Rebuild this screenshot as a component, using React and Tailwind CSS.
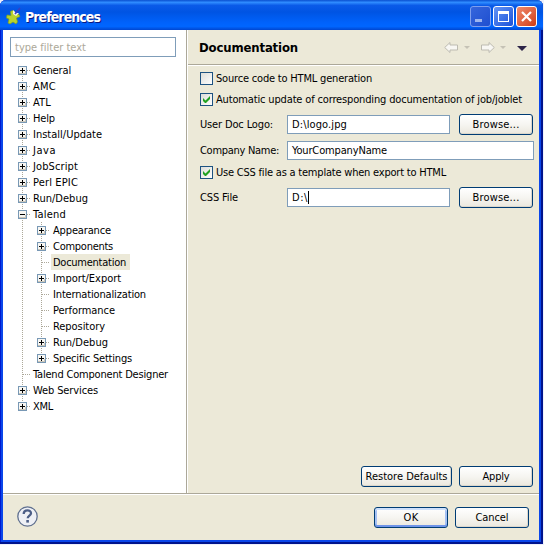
import { useLayoutEffect, useRef, useState } from "react";

// Text whose letter spacing is adjusted so that it fills a given width.
function Label({ w, children, className = "" }) {
  const ref = useRef(null);
  const [spacing, setSpacing] = useState(0);
  useLayoutEffect(() => {
    const natural = ref.current.getBoundingClientRect().width;
    setSpacing((w - natural) / children.length);
  }, []);
  return (
    <span ref={ref} className={`inline-block whitespace-pre ${className}`} style={{ letterSpacing: `${spacing}px` }}>
      {children}
    </span>
  );
}

const TREE = [
  ["General", 38, 0, "+"],
  ["AMC", 23, 0, "+"],
  ["ATL", 18, 0, "+"],
  ["Help", 22, 0, "+"],
  ["Install/Update", 69, 0, "+"],
  ["Java", 23, 0, "+"],
  ["JobScript", 45, 0, "+"],
  ["Perl EPIC", 45, 0, "+"],
  ["Run/Debug", 55, 0, "+"],
  ["Talend", 33, 0, "-"],
  ["Appearance", 58, 1, "+"],
  ["Components", 60, 1, "+"],
  ["Documentation", 73, 1, ""],
  ["Import/Export", 68, 1, "+"],
  ["Internationalization", 93, 1, ""],
  ["Performance", 62, 1, ""],
  ["Repository", 52, 1, ""],
  ["Run/Debug", 55, 1, "+"],
  ["Specific Settings", 79, 1, "+"],
  ["Talend Component Designer", 135, 0, ""],
  ["Web Services", 65, 0, "+"],
  ["XML", 20, 0, "+"],
];

function Branch({ mark, top, bottom }) {
  return (
    <svg width="19" height="16" className="shrink-0" shapeRendering="crispEdges">
      <path d={`M9.5 ${top ? 8 : 0}V${bottom ? 9 : 16}`} stroke="#aca899" strokeDasharray="1 1" />
      {mark !== null && <path d="M10 8.5H18" stroke="#aca899" strokeDasharray="1 1" />}
      {mark && (
        <>
          <rect x="5.5" y="4.5" width="8" height="8" rx="1" fill="#f7f6f2" stroke="#7898b5" />
          <path d="M6 11.5H13M12.5 9V12" stroke="#cbc5b7" />
          <path d="M7 8.5H12" stroke="#000" />
          {mark === "+" && <path d="M9.5 6V11" stroke="#000" />}
        </>
      )}
    </svg>
  );
}

function TreeRow({ row, index }) {
  const [text, w, depth, mark] = row;
  const selected = text === "Documentation";
  return (
    <div className="flex h-4 items-center">
      <Branch mark={depth ? null : mark} top={index === 0} bottom={index === TREE.length - 1} />
      {depth === 1 && <Branch mark={mark} bottom={index === 18} />}
      <div className={`h-4 leading-[17px] ${depth ? "pl-[2px]" : "-ml-px pl-[2px]"} ${selected ? "w-[79px] bg-[#ece9d8]" : ""}`}>
        <Label w={w}>{text}</Label>
      </div>
    </div>
  );
}

function Button({ w, textWidth, focus, children }) {
  return (
    <div
      style={{ width: w }}
      className={`flex h-[21px] items-center justify-center rounded-[3px] border border-[#003c74] bg-linear-to-b from-white via-[#f6f5f1] to-[#ebe8de] ${focus ? "shadow-[inset_0_2px_0_#cee0fb,inset_0_-2px_0_#6f94e8,inset_2px_0_0_#a5c1f3,inset_-2px_0_0_#a5c1f3]" : "shadow-[inset_-1px_-1px_0_#dcd7cb]"}`}
    >
      <Label w={textWidth} className="leading-[19px]">{children}</Label>
    </div>
  );
}

function Check({ on, w, children }) {
  return (
    <div className="flex h-[13px] items-center">
      <svg width="13" height="13" className="mr-[3px]">
        <defs>
          <linearGradient id="well" x1="0" y1="0" x2="1" y2="1">
            <stop stopColor="#dcdcd7" />
            <stop offset="1" stopColor="#fff" />
          </linearGradient>
        </defs>
        <rect x=".5" y=".5" width="12" height="12" fill="url(#well)" stroke="#1d5281" />
        {on && <path d="M3 5v3l2 2h1l4-4V3L5.500 7.500z" fill="#21a121" />}
      </svg>
      <Label w={w} className="leading-[15px]">{children}</Label>
    </div>
  );
}

function Field({ w, textWidth, caret, children }) {
  return (
    <div style={{ width: w }} className="flex h-[19px] items-center border border-[#7f9db9] bg-white pl-1">
      <Label w={textWidth}>{children}</Label>
      {caret && <span className="h-[13px] w-px bg-black" />}
    </div>
  );
}

function HeaderArrows() {
  const arrow = "M0.700 6.500L6 1.500V4H13.500V9H6V11.500Z";
  return (
    <svg width="86" height="14" className="mt-[1px]">
      <path d={arrow} fill="#f8f7f3" stroke="#bdbbb1" strokeLinejoin="round" />
      <path d="M20 5h6l-3 3z" fill="#c5c2b5" />
      <path d={arrow} transform="matrix(-1 0 0 1 51 0)" fill="#f8f7f3" stroke="#bdbbb1" strokeLinejoin="round" />
      <path d="M56 5h6l-3 3z" fill="#c5c2b5" />
      <path d="M73 5h10l-5 5z" fill="#2d2548" />
    </svg>
  );
}

const CAPTION = "h-[21px] w-[21px] rounded-[3px] border";

function TitleBar() {
  return (
    <div className="flex h-[30px] shrink-0 items-start rounded-t-[6px] bg-[linear-gradient(180deg,#0a50d0_0%,#2f8cff_8%,#0a5be8_18%,#0054e3_40%,#0062fb_75%,#0066ff_88%,#0046d0_100%)] pl-[6px] pr-[6px] pt-[6px]">
      <svg width="16" height="18" className="mt-[1px]">
        <path d="M4.500 4.500l2-1 2 1 .5 2.500 4 .5 1 2-3.500 1.500 1 4-1.500 2-3-2-3 2-2-1 1-4-2.500-1 .5-3 4 .5z" fill="#b9d42c" stroke="#7f9f1c" strokeWidth=".7" />
        <path d="M7 3l3 3 3 0-3 3-3-2z" fill="#f4f6e8" />
        <path d="M9 7l5-6" stroke="#3a3fc0" strokeWidth="1.600" />
      </svg>
      <Label w={75} className="ml-[3px] mt-px text-[14px] font-bold leading-[20px] text-white [text-shadow:1px_1px_0_#0a1883]">Preferences</Label>
      <div className="ml-auto flex gap-[2px]">
        <div className={`${CAPTION} border-[#7d9eee] bg-linear-to-br from-[#3565dc] to-[#1f4fd0]`}>
          <div className="ml-1 mt-[12px] h-[3px] w-[7px] bg-[#9db5ef]" />
        </div>
        <div className={`${CAPTION} border-white bg-linear-to-br from-[#6494f5] to-[#1b4fd8] p-[4px]`}>
          <div className="h-[11px] w-[11px] border border-t-[3px] border-white" />
        </div>
        <div className={`${CAPTION} border-white bg-linear-to-br from-[#f08a6b] to-[#cf3a10]`}>
          <svg width="19" height="19">
            <path d="M5 5l9 9M14 5l-9 9" stroke="#fff" strokeWidth="2.200" />
          </svg>
        </div>
      </div>
    </div>
  );
}

export default function App() {
  return (
    <div className="flex h-[545px] w-[544px] flex-col overflow-hidden bg-[#eef0fa] font-['DejaVu_Sans_Condensed','DejaVu_Sans',sans-serif] text-[11px] leading-[13px] text-black">
      <div className="flex h-[544px] w-[543px] flex-col rounded-t-[6px] bg-[#0a46ea] shadow-[inset_-2px_-2px_0_#00138c,inset_1px_0_0_#0019cf]">
        <TitleBar />
        <div className="ml-[3px] flex h-[510px] w-[536px] flex-col bg-[#ece9d8]">
          <div className="flex h-[463px]">
            <div className="h-full w-[184px] border-r border-[#aca899] bg-white pl-[7px] pt-[7px]">
              <div className="h-[20px] w-[166px] border border-[#7f9db9] pl-1 leading-[19px] text-[#aca899]">
                <Label w={71}>type filter text</Label>
              </div>
              <div className="mt-[5px] pl-[3px]">
                {TREE.map((row, i) => (
                  <TreeRow key={i} row={row} index={i} />
                ))}
              </div>
            </div>
            <div className="flex w-[352px] flex-col border-l border-white">
              <div className="flex h-[35px] shrink-0 items-center justify-between border-b border-[#aca899] pl-[11px] pr-[9px]">
                <Label w={99} className="mt-[2px] text-[13px] font-bold leading-[16px]">Documentation</Label>
                <HeaderArrows />
              </div>
              <div className="flex grow flex-col border-t border-white pl-3 pt-[6px]">
                <Check w={156}>Source code to HTML generation</Check>
                <div className="mt-2">
                  <Check on w={306}>Automatic update of corresponding documentation of job/joblet</Check>
                </div>
                <div className="mt-2 flex items-center">
                  <div className="w-[87px]"><Label w={73}>User Doc Logo:</Label></div>
                  <Field w={163} textWidth={55}>D:\logo.jpg</Field>
                  <div className="ml-[9px]"><Button w={74} textWidth={47}>Browse...</Button></div>
                </div>
                <div className="mt-[6px] flex items-center">
                  <div className="w-[87px]"><Label w={79}>Company Name:</Label></div>
                  <Field w={247} textWidth={95}>YourCompanyName</Field>
                </div>
                <div className="mt-[6px]">
                  <Check on w={230}>Use CSS file as a template when export to HTML</Check>
                </div>
                <div className="mt-2 flex items-center">
                  <div className="w-[87px]"><Label w={38}>CSS File</Label></div>
                  <Field w={163} textWidth={16} caret>{"D:\\"}</Field>
                  <div className="ml-[9px]"><Button w={74} textWidth={47}>Browse...</Button></div>
                </div>
                <div className="mb-[6px] mr-[6px] mt-auto flex justify-end gap-[7px]">
                  <Button w={91} textWidth={82}>Restore Defaults</Button>
                  <Button w={74} textWidth={27}>Apply</Button>
                </div>
              </div>
            </div>
          </div>
          <div className="flex grow items-center gap-[7px] border-t border-[#aca899] pl-[14px] pr-[10px] shadow-[inset_0_1px_0_#fff]">
            <svg width="21" height="21" className="mr-auto mt-[-2px]">
              <circle cx="10.500" cy="10.500" r="9.700" fill="#eef0f5" stroke="#60708f" strokeWidth="1.300" />
              <path d="M6.700 8c0-5 7.600-4.500 7.300-.7-.2 2.400-3.300 2.300-3.300 5" fill="none" stroke="#4d5f87" strokeWidth="2.300" />
              <rect x="9.300" y="14" width="2.600" height="2.600" fill="#4d5f87" />
            </svg>
            <Button w={74} textWidth={15} focus>OK</Button>
            <Button w={74} textWidth={33}>Cancel</Button>
          </div>
        </div>
      </div>
    </div>
  );
}
